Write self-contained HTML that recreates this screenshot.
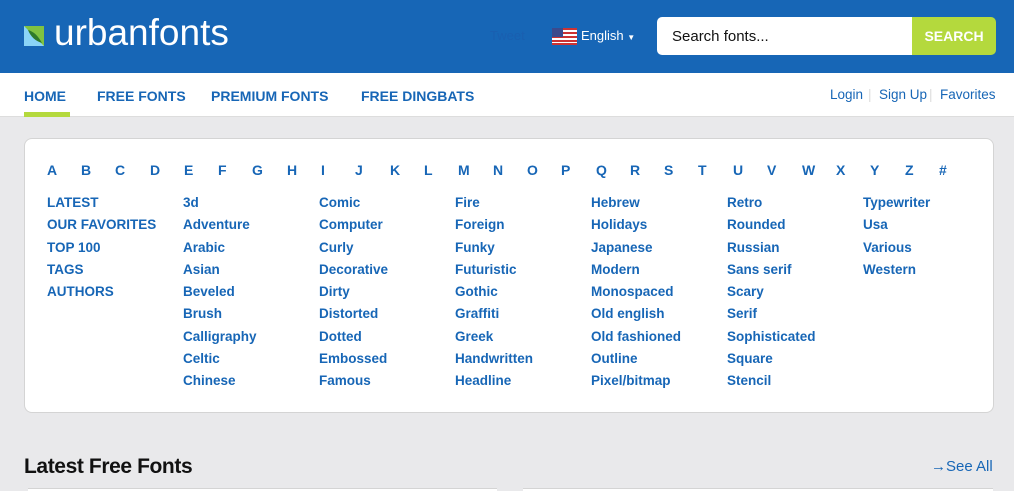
<!DOCTYPE html>
<html><head><meta charset="utf-8"><style>
*{margin:0;padding:0;box-sizing:border-box}
body{width:1014px;height:491px;overflow:hidden;background:#e9e9eb;font-family:"Liberation Sans",sans-serif;position:relative}
.hdr{position:absolute;left:0;top:0;width:1014px;height:73px;background:#1766b6}
.logo{position:absolute;color:#fff;font-size:37px;line-height:40px;letter-spacing:0px}
.nav{position:absolute;left:0;top:73px;width:1014px;height:44px;background:#fff;border-bottom:1px solid #ddd}
.nav a{position:absolute;top:15px;display:block;line-height:16px;height:16px;color:#1766b6;font-size:14px;font-weight:bold;text-decoration:none}
.rl{position:absolute;top:14px;font-size:13.5px;color:#1766b6}
.card{position:absolute;left:24px;top:138px;width:970px;height:275px;background:#fff;border:1px solid #d4d4d4;border-radius:8px}
.let{position:absolute;top:162px;color:#1766b6;font-size:14px;font-weight:bold}
.col{position:absolute;top:192px;color:#1766b6;font-size:13.5px;font-weight:bold;line-height:22.3px}
</style></head><body>
<div class="hdr">
<svg style="position:absolute;left:24px;top:26px" width="20" height="20"><rect x="0" y="0" width="20" height="20" fill="#8ad4f7"/><polygon points="0,0 20,0 20,20" fill="#7fc241"/><path d="M4 4 Q12 6 18 17 Q8 14 4 4Z" fill="#2f7a2a"/></svg>
<div class="logo" style="left:54px;top:13px">urbanfonts</div>
<div style="position:absolute;left:490px;top:28px;color:#1a5fb0;font-size:13px">Tweet</div>
<svg style="position:absolute;left:552px;top:28px" width="25" height="17"><rect width="25" height="17" fill="#fff"/><g fill="#c33"><rect y="0" width="25" height="2"/><rect y="4" width="25" height="2"/><rect y="8" width="25" height="2"/><rect y="12" width="25" height="2"/><rect y="15" width="25" height="2"/></g><rect width="11" height="9" fill="#3c4a8c"/></svg>
<div style="position:absolute;left:581px;top:28px;color:#fff;font-size:13px">English <span style="font-size:8px">▼</span></div>
<div style="position:absolute;left:657px;top:17px;width:255px;height:38px;background:#fff;border-radius:5px 0 0 5px"></div>
<div style="position:absolute;left:672px;top:28px;color:#111;font-size:15px">Search fonts...</div>
<div style="position:absolute;left:912px;top:17px;width:84px;height:38px;background:#b4d93d;border-radius:0 5px 5px 0;color:#fff;font-weight:bold;font-size:14px;text-align:center;line-height:38px">SEARCH</div>
</div>
<div class="nav">
<a style="left:24px">HOME</a><div style="position:absolute;left:24px;top:39px;width:46px;height:5px;background:#b4d93d"></div>
<a style="left:97px">FREE FONTS</a><a style="left:211px">PREMIUM FONTS</a><a style="left:361px">FREE DINGBATS</a>
<span class="rl" style="left:830px">Login</span><span class="rl" style="left:868px;color:#ddd">|</span>
<span class="rl" style="left:879px">Sign Up</span><span class="rl" style="left:929px;color:#ddd">|</span>
<span class="rl" style="left:940px">Favorites</span>
</div>
<div class="card"></div>
<div class="let" style="left:47px">A</div><div class="let" style="left:81px">B</div><div class="let" style="left:115px">C</div><div class="let" style="left:150px">D</div><div class="let" style="left:184px">E</div><div class="let" style="left:218px">F</div><div class="let" style="left:252px">G</div><div class="let" style="left:287px">H</div><div class="let" style="left:321px">I</div><div class="let" style="left:355px">J</div><div class="let" style="left:390px">K</div><div class="let" style="left:424px">L</div><div class="let" style="left:458px">M</div><div class="let" style="left:493px">N</div><div class="let" style="left:527px">O</div><div class="let" style="left:561px">P</div><div class="let" style="left:596px">Q</div><div class="let" style="left:630px">R</div><div class="let" style="left:664px">S</div><div class="let" style="left:698px">T</div><div class="let" style="left:733px">U</div><div class="let" style="left:767px">V</div><div class="let" style="left:802px">W</div><div class="let" style="left:836px">X</div><div class="let" style="left:870px">Y</div><div class="let" style="left:905px">Z</div><div class="let" style="left:939px">#</div>
<div class="col" style="left:47px">LATEST<br>OUR FAVORITES<br>TOP 100<br>TAGS<br>AUTHORS</div>
<div class="col" style="left:183px">3d<br>Adventure<br>Arabic<br>Asian<br>Beveled<br>Brush<br>Calligraphy<br>Celtic<br>Chinese</div>
<div class="col" style="left:319px">Comic<br>Computer<br>Curly<br>Decorative<br>Dirty<br>Distorted<br>Dotted<br>Embossed<br>Famous</div>
<div class="col" style="left:455px">Fire<br>Foreign<br>Funky<br>Futuristic<br>Gothic<br>Graffiti<br>Greek<br>Handwritten<br>Headline</div>
<div class="col" style="left:591px">Hebrew<br>Holidays<br>Japanese<br>Modern<br>Monospaced<br>Old english<br>Old fashioned<br>Outline<br>Pixel/bitmap</div>
<div class="col" style="left:727px">Retro<br>Rounded<br>Russian<br>Sans serif<br>Scary<br>Serif<br>Sophisticated<br>Square<br>Stencil</div>
<div class="col" style="left:863px">Typewriter<br>Usa<br>Various<br>Western</div>
<div style="position:absolute;left:24px;top:455px;font-size:21px;font-weight:bold;color:#111;letter-spacing:-0.4px">Latest Free Fonts</div>
<div style="position:absolute;left:931px;top:458px;font-size:15px;color:#1766b6">→See All</div>
<div style="position:absolute;left:28px;top:488px;width:469px;height:3px;background:#fff;border-top:1px solid #d4d4d4"></div>
<div style="position:absolute;left:523px;top:488px;width:470px;height:3px;background:#fff;border-top:1px solid #d4d4d4"></div>
</body></html>
